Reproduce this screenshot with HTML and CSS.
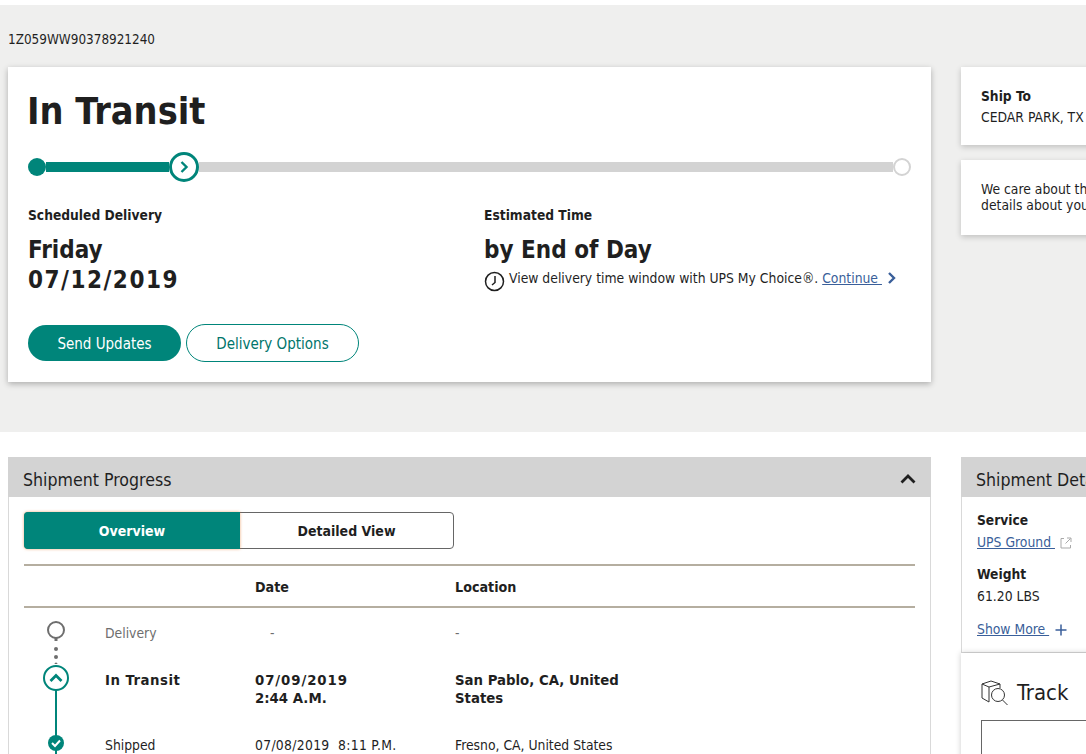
FILE: index.html
```html
<!DOCTYPE html>
<html lang="en">
<head>
<meta charset="utf-8">
<title>Tracking</title>
<link rel="stylesheet" href="styles.css">
</head>
<body>
<section class="hero">
  <p class="tracking-number">1Z059WW90378921240</p>
  <div class="columns">
    <div class="main-col">
      <article class="status-card">
        <h1 class="status-title">In Transit</h1>
        <div class="progress">
          <span class="progress-start"></span>
          <span class="progress-fill"></span>
          <span class="progress-now">
            <svg width="12" height="12" viewBox="0 0 12 12"><path d="M3.500 1 8.500 6 3.500 11" fill="none" stroke="#00857a" stroke-width="2.400"/></svg>
          </span>
          <span class="progress-rest"></span>
          <span class="progress-end"></span>
        </div>
        <div class="delivery">
          <div class="delivery-col">
            <h2 class="delivery-label">Scheduled Delivery</h2>
            <p class="delivery-value">Friday<br><span class="digits">07/12/2019</span></p>
          </div>
          <div class="delivery-col">
            <h2 class="delivery-label">Estimated Time</h2>
            <p class="delivery-value">by End of Day</p>
            <p class="delivery-note">
              <svg class="clock" width="21" height="21" viewBox="0 0 21 21"><circle cx="10.500" cy="10.500" r="9" fill="none" stroke="#1f1f1f" stroke-width="1.500"/><path d="M11 5v6.500L8 14" fill="none" stroke="#1f1f1f" stroke-width="1.500"/></svg>
              <span>View delivery time window with UPS My Choice®. <a href="#" class="link">Continue&nbsp;</a></span>
              <svg class="chev" width="10" height="12" viewBox="0 0 10 12"><path d="M2 1 7 6 2 11" fill="none" stroke="#3a5f9a" stroke-width="2.400"/></svg>
            </p>
          </div>
        </div>
        <div class="actions">
          <button class="btn btn-solid">Send Updates</button>
          <button class="btn btn-outline">Delivery Options</button>
        </div>
      </article>
    </div>
    <aside class="side-col">
      <div class="side-card ship-card">
        <strong class="side-title">Ship To</strong>
        <span class="ship-place">CEDAR PARK, TX</span>
      </div>
      <div class="side-card care-card">We care about the<br>details about your</div>
    </aside>
  </div>
</section>
<section class="lower">
  <div class="main-col">
    <article class="panel">
      <header class="panel-head">
        <span>Shipment Progress</span>
        <svg class="collapse" width="16" height="10" viewBox="0 0 16 10"><path d="M1.500 8.500 8 2l6.500 6.500" fill="none" stroke="#1f1f1f" stroke-width="2.800"/></svg>
      </header>
      <div class="panel-body">
        <div class="toggle">
          <span class="toggle-item toggle-on">Overview</span>
          <span class="toggle-item">Detailed View</span>
        </div>
        <div class="t-row t-head">
          <span></span><span></span><span>Date</span><span>Location</span>
        </div>
        <div class="t-row t-delivery">
          <svg class="t-icon" width="24" height="56" viewBox="0 0 24 56"><circle cx="12" cy="22" r="8" fill="none" stroke="#6e6e6e" stroke-width="2"/><path d="M12 30v3" stroke="#6e6e6e" stroke-width="3"/><g fill="#6e6e6e"><circle cx="12" cy="41" r="2"/><circle cx="12" cy="49" r="2"/><circle cx="12" cy="56" r="1.500"/></g></svg>
          <span>Delivery</span><span class="dash">-</span><span>-</span>
        </div>
        <div class="t-row t-current">
          <svg class="t-icon" width="28" height="68" viewBox="0 0 28 68"><path d="M14 26v42" stroke="#00857a" stroke-width="2"/><circle cx="14" cy="14" r="12" fill="#fff" stroke="#00857a" stroke-width="2"/><path d="M8.500 17 14 11.500l5.500 5.500" fill="none" stroke="#00857a" stroke-width="2.800"/></svg>
          <span class="t-status">In Transit</span><span><span class="digits-sm">07/09/2019</span><br>2:44 A.M.</span><span>San Pablo, CA, United<br>States</span>
        </div>
        <div class="t-row t-done">
          <svg class="t-icon" width="18" height="30" viewBox="0 0 18 30"><path d="M9 0v30" stroke="#00857a" stroke-width="2"/><circle cx="9" cy="11" r="8" fill="#00857a"/><path d="M5 11l3 3 5-5.500" fill="none" stroke="#fff" stroke-width="2"/></svg>
          <span>Shipped</span><span class="date-sm">07/08/2019&nbsp; 8:11 P.M.</span><span>Fresno, CA, United States</span>
        </div>
      </div>
    </article>
  </div>
  <aside class="side-col">
    <article class="panel details">
      <header class="panel-head"><span>Shipment Details</span></header>
      <div class="details-body">
        <strong class="side-title">Service</strong>
        <span class="detail-value">
          <a href="#" class="link">UPS Ground&nbsp;</a>
          <svg class="ext" width="12" height="12" viewBox="0 0 12 12"><path d="M4 1.500H1v9.500h9.500V8M5.500 6.500l5-5M7 1h4v4" fill="none" stroke="#a9a9a9"/></svg>
        </span>
        <strong class="side-title weight">Weight</strong>
        <span class="detail-value">61.20 LBS</span>
        <span class="more">
          <a href="#" class="link">Show More&nbsp;</a>
          <svg width="12" height="12" viewBox="0 0 12 12"><path d="M6 .5v11M.5 6h11" stroke="#3a5f9a" stroke-width="1.500"/></svg>
        </span>
      </div>
    </article>
    <article class="track-card">
      <h2 class="track-title">
        <svg width="30" height="26" viewBox="0 0 30 26"><g fill="none" stroke="#333"><path d="M1 4l9-3 9 3v4M1 4v14l7 4M1 4l7 3 11-3M8 7v15"/><circle cx="17" cy="15" r="6.500"/><path d="M21.500 20l5 5"/></g></svg>
        <span>Track</span>
      </h2>
      <div class="track-input"></div>
    </article>
  </aside>
</section>
</body>
</html>
```
FILE: styles.css
```css
* { box-sizing: border-box; }
html, body { margin: 0; height: 754px; overflow: hidden; background: #fff; }
body {
  font-family: "DejaVu Sans", Tahoma, sans-serif;
  font-stretch: condensed;
  font-size: 13.800px;
  color: #1f1f1f;
  padding-top: 5px;
}
p, h1, h2 { margin: 0; }
.hero { background: #efefee; height: 427px; padding: 0 8px; }
.tracking-number { padding-top: 27px; height: 62px; line-height: 16px; font-size: 13.400px; }
.columns, .lower { display: flex; gap: 30px; width: 1400px; }
.main-col { width: 923px; flex: none; }
.side-col { width: 400px; flex: none; }
.status-card {
  background: #fff;
  height: 315px;
  padding: 23px 20px 0;
  box-shadow: 0 2px 6px rgba(0,0,0,.28);
}
.status-title { font-size: 37.500px; line-height: 42px; font-weight: 700; margin-left: -1px; }
.progress { display: flex; align-items: center; height: 30px; margin-top: 20px; }
.progress-start { width: 18px; height: 18px; border-radius: 50%; background: #00857a; flex: none; }
.progress-fill { width: 123px; height: 10px; background: #00857a; flex: none; }
.progress-now {
  width: 30px; height: 30px; flex: none;
  border: 3px solid #00857a; border-radius: 50%;
  background: #fff;
  display: flex; align-items: center; justify-content: center;
}
.progress-rest { flex: 1; height: 10px; background: #d3d3d3; }
.progress-end { width: 18px; height: 18px; flex: none; border: 2px solid #d3d3d3; border-radius: 50%; background: #fff; }
.delivery { display: flex; margin-top: 25px; }
.delivery-col { width: 457px; flex: none; }
.delivery-col + .delivery-col { margin-left: -1px; }
.delivery-label { font-size: 13.700px; line-height: 17px; font-weight: 700; }
.delivery-value { font-size: 24px; line-height: 30px; font-weight: 700; margin-top: 11px; }
.digits { letter-spacing: 1.500px; }
.delivery-note { display: flex; align-items: flex-start; gap: 4px; line-height: 16px; margin-top: 5px; white-space: nowrap; }
.clock { flex: none; margin-top: 1px; }
.chev { flex: none; margin: 2px 0 0 1px; }
.link { color: #3a5f9a; text-decoration: underline; }
.actions { display: flex; align-items: center; gap: 5px; margin-top: 29px; }
.btn { font: inherit; font-size: 15px; border-radius: 19px; padding: 1px 0 0; }
.btn-solid { width: 153px; height: 36px; background: #00857a; color: #fff; border: 0; }
.btn-outline { width: 173px; height: 38px; background: #fff; color: #00756b; border: 1px solid #00857a; }
.side-card { background: #fff; box-shadow: 0 2px 6px rgba(0,0,0,.2); padding: 0 20px; white-space: nowrap; }
.ship-card { height: 78px; display: flex; flex-direction: column; padding-top: 19px; line-height: 20px; }
.ship-place { margin-top: 1px; }
.side-title { font-weight: 700; font-size: 13.700px; }
.care-card { height: 75px; margin-top: 15px; padding-top: 21px; line-height: 16px; }
.lower { padding: 25px 8px 0; }
.panel { border: 1px solid #d9d9d9; border-top: 0; height: 600px; }
.panel-head {
  height: 40px; background: #d3d3d3; margin: 0 -1px;
  padding: 5px 15px 0;
  display: flex; align-items: center; justify-content: space-between;
  font-size: 17.600px;
  white-space: nowrap;
}
.collapse { margin-top: -1px; }
.panel-body { padding: 15px 15px 0; }
.toggle { display: flex; width: 430px; height: 37px; border: 1px solid #666; border-radius: 4px; font-weight: 700; font-size: 14px; }
.toggle-item { flex: 1; display: flex; align-items: center; justify-content: center; }
.toggle-on { flex: none; width: 216px; margin: -1px 0 -1px -1px; background: #00857a; color: #fff; border-radius: 4px 0 0 4px; box-shadow: 0 0 3px rgba(230,130,60,.7); }
.t-row { display: grid; grid-template-columns: 81px 150px 200px 190px; align-items: start; }
.t-icon { display: block; justify-self: center; margin-right: 17px; }
.t-head { margin-top: 15px; height: 44px; border-top: 2px solid #b5aea0; border-bottom: 2px solid #b5aea0; align-items: center; font-weight: 700; font-size: 14.200px; padding-top: 1px; }
.t-delivery { height: 56px; color: #6e6e6e; }
.t-delivery span { padding-top: 17px; line-height: 16px; }
.t-delivery .dash { padding-left: 15px; }
.t-current { height: 68px; font-weight: 700; font-size: 14.800px; line-height: 18px; }
.t-current > span { padding-top: 7px; }
.t-status { letter-spacing: .5px; }
.digits-sm { letter-spacing: .9px; }
.t-done { height: 30px; }
.t-done span { padding-top: 5px; line-height: 16px; }
.date-sm { letter-spacing: .3px; }
.details { height: 196px; }
.details-body { padding: 15px 15px 0; display: flex; flex-direction: column; line-height: 17px; }
.detail-value { display: flex; align-items: center; gap: 3px; margin-top: 5px; }
.ext { margin-left: 2px; }
.weight { margin-top: 15px; }
.more { display: flex; align-items: center; gap: 6px; margin-top: 16px; }
.track-card { background: #fff; box-shadow: 0 0 6px rgba(0,0,0,.2); padding: 26px 20px 0; height: 200px; }
.track-title { display: flex; align-items: center; gap: 6px; font-size: 22px; font-weight: 400; line-height: 28px; }
.track-input { margin-top: 13px; height: 80px; border: 1px solid #666; }
```
